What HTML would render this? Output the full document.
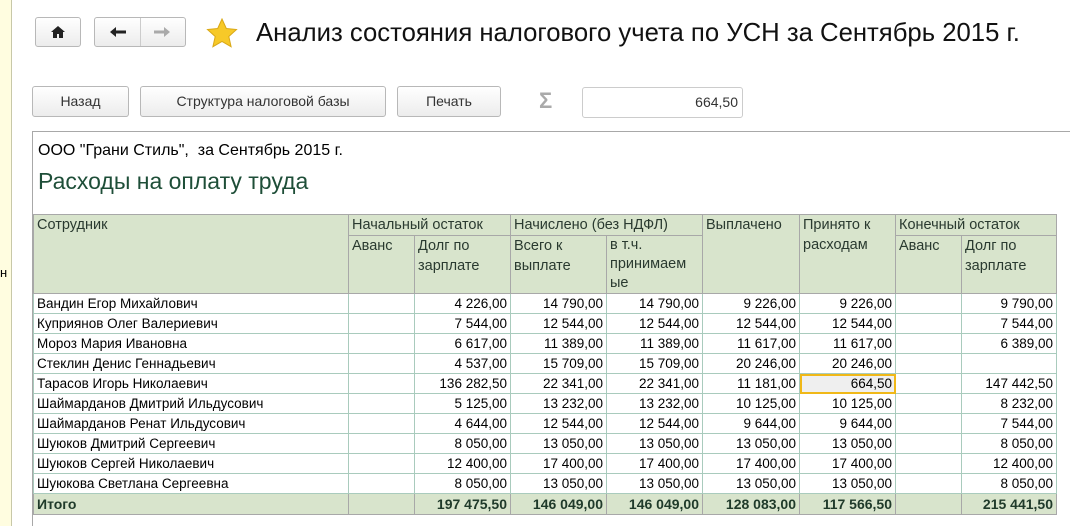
<!DOCTYPE html>
<html><head><meta charset="utf-8"><style>
body{margin:0;width:1070px;height:526px;overflow:hidden;background:#fff;font-family:"Liberation Sans",Arial,sans-serif;position:relative}
.a{position:absolute}
.btn{position:absolute;border:1px solid #b8b8b8;border-radius:3px;background:linear-gradient(#fff,#ececec);font-size:14px;color:#333;text-align:center;box-sizing:border-box}
table{position:absolute;left:33px;top:214px;border-collapse:collapse;table-layout:fixed;font-size:13.5px}
td{padding:0 3px;height:19px;border:1px solid #a9cbbd;white-space:nowrap;text-align:right;line-height:19px;overflow:hidden}
td:first-child{text-align:left}
.h td{background:#d8e4cc;border:1px solid #a8a8a8;color:#2a3a30;text-align:left;vertical-align:top;font-size:14.5px;line-height:20px;white-space:normal}
.t td{background:#d8e4cc;border:1px solid #a8a8a8;font-weight:bold;color:#1f3a2a;height:20px;font-size:14px}
</style></head><body>
<div class="a" style="left:0;top:0;width:11px;height:526px;background:#fffde0;border-right:1px solid #c8c8a8"></div>
<div class="a" style="left:0;top:265px;font-size:13px">н</div>
<div class="btn" style="left:35px;top:17px;width:46px;height:30px"><svg width="16" height="14" viewBox="0 0 16 14" style="margin-top:7px"><path d="M8 1L1 7h2v6h4V9h2v4h4V7h2z" fill="#222"/></svg></div>
<div class="btn" style="left:94px;top:17px;width:92px;height:30px"><div class="a" style="left:45px;top:0;width:1px;height:28px;background:#ccc"></div><svg class="a" style="left:14px;top:8px" width="18" height="12" viewBox="0 0 18 12"><path d="M1 6l6-5v3.5h10v3H7V11z" fill="#222"/></svg><svg class="a" style="left:58px;top:8px" width="18" height="12" viewBox="0 0 18 12"><path d="M17 6l-6-5v3.5H1v3h10V11z" fill="#aaa"/></svg></div>
<svg class="a" style="left:206px;top:18px" width="32" height="30" viewBox="0 0 32 30"><path d="M16 1l4.3 9.5 10.2 1-7.7 7 2.3 10.2L16 23.4l-9.1 5.3 2.3-10.2-7.7-7 10.2-1z" fill="#f7c928" stroke="#d9a817" stroke-width="1"/></svg>
<div class="a" style="left:256px;top:19px;font-size:25.7px;color:#111">Анализ состояния налогового учета по УСН за Сентябрь 2015 г.</div>
<div class="btn" style="left:32px;top:86px;width:97px;height:31px;line-height:29px">Назад</div>
<div class="btn" style="left:140px;top:86px;width:246px;height:31px;line-height:29px">Структура налоговой базы</div>
<div class="btn" style="left:397px;top:86px;width:104px;height:31px;line-height:29px">Печать</div>
<div class="a" style="left:539px;top:88px;font-size:22px;color:#aaa;font-weight:bold">Σ</div>
<div class="a" style="left:582px;top:87px;width:161px;height:31px;border:1px solid #ccc;border-radius:3px;box-sizing:border-box;text-align:right;padding-right:4px;line-height:29px;font-size:14px;color:#333">664,50</div>
<div class="a" style="left:32px;top:131px;width:1038px;height:1px;background:#a8a8a8"></div>
<div class="a" style="left:32px;top:131px;width:1px;height:395px;background:#a8a8a8"></div>
<div class="a" style="left:38px;top:142px;font-size:16px;color:#000">ООО "Грани Стиль",&nbsp; за Сентябрь 2015 г.</div>
<div class="a" style="left:38px;top:168px;font-size:23px;color:#1e4e38">Расходы на оплату труда</div>
<table>
<colgroup><col style="width:315px"><col style="width:66px"><col style="width:96px"><col style="width:96px"><col style="width:96px"><col style="width:97px"><col style="width:96px"><col style="width:66px"><col style="width:95px"></colgroup>
<tr class="h"><td rowspan="2" style="height:78px">Сотрудник</td><td colspan="2">Начальный остаток</td><td colspan="2">Начислено (без НДФЛ)</td><td rowspan="2">Выплачено</td><td rowspan="2">Принято к расходам</td><td colspan="2">Конечный остаток</td></tr>
<tr class="h"><td style="height:57px">Аванс</td><td>Долг по зарплате</td><td>Всего к выплате</td><td style="line-height:19px">в т.ч. принимаем ые</td><td>Аванс</td><td>Долг по зарплате</td></tr>
<tr><td>Вандин Егор Михайлович</td><td></td><td>4 226,00</td><td>14 790,00</td><td>14 790,00</td><td>9 226,00</td><td>9 226,00</td><td></td><td>9 790,00</td></tr>
<tr><td>Куприянов Олег Валериевич</td><td></td><td>7 544,00</td><td>12 544,00</td><td>12 544,00</td><td>12 544,00</td><td>12 544,00</td><td></td><td>7 544,00</td></tr>
<tr><td>Мороз Мария Ивановна</td><td></td><td>6 617,00</td><td>11 389,00</td><td>11 389,00</td><td>11 617,00</td><td>11 617,00</td><td></td><td>6 389,00</td></tr>
<tr><td>Стеклин Денис Геннадьевич</td><td></td><td>4 537,00</td><td>15 709,00</td><td>15 709,00</td><td>20 246,00</td><td>20 246,00</td><td></td><td></td></tr>
<tr><td>Тарасов Игорь Николаевич</td><td></td><td>136 282,50</td><td>22 341,00</td><td>22 341,00</td><td>11 181,00</td><td style="background:#efefef;outline:2px solid #f0b818;outline-offset:-2px">664,50</td><td></td><td>147 442,50</td></tr>
<tr><td>Шаймарданов Дмитрий Ильдусович</td><td></td><td>5 125,00</td><td>13 232,00</td><td>13 232,00</td><td>10 125,00</td><td>10 125,00</td><td></td><td>8 232,00</td></tr>
<tr><td>Шаймарданов Ренат Ильдусович</td><td></td><td>4 644,00</td><td>12 544,00</td><td>12 544,00</td><td>9 644,00</td><td>9 644,00</td><td></td><td>7 544,00</td></tr>
<tr><td>Шуюков Дмитрий Сергеевич</td><td></td><td>8 050,00</td><td>13 050,00</td><td>13 050,00</td><td>13 050,00</td><td>13 050,00</td><td></td><td>8 050,00</td></tr>
<tr><td>Шуюков Сергей Николаевич</td><td></td><td>12 400,00</td><td>17 400,00</td><td>17 400,00</td><td>17 400,00</td><td>17 400,00</td><td></td><td>12 400,00</td></tr>
<tr><td>Шуюкова Светлана Сергеевна</td><td></td><td>8 050,00</td><td>13 050,00</td><td>13 050,00</td><td>13 050,00</td><td>13 050,00</td><td></td><td>8 050,00</td></tr>
<tr class="t"><td>Итого</td><td></td><td>197 475,50</td><td>146 049,00</td><td>146 049,00</td><td>128 083,00</td><td>117 566,50</td><td></td><td>215 441,50</td></tr>
</table>
</body></html>
